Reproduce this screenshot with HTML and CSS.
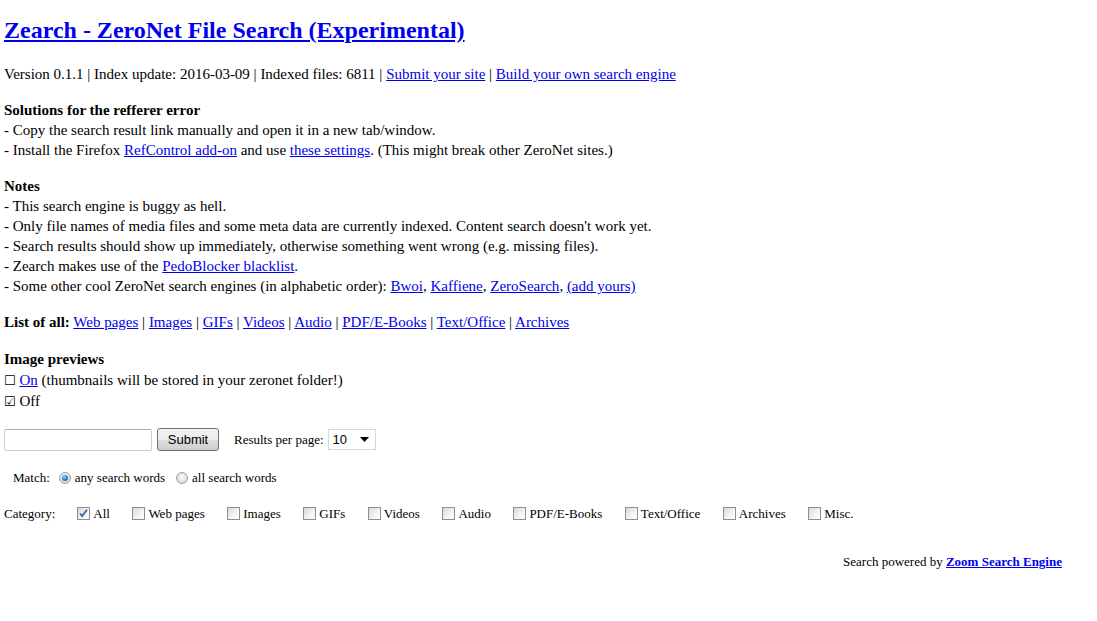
FILE: index.html
```html
<!DOCTYPE html>
<html>
<head>
<meta charset="utf-8">
<title>Zearch</title>
<link rel="stylesheet" href="styles.css">
</head>
<body>
<h1 class="title"><a href="#">Zearch - ZeroNet File Search (Experimental)</a></h1>
<p class="para first">Version 0.1.1 | Index update: 2016-03-09 | Indexed files: 6811 | <a href="#">Submit your site</a> | <a href="#">Build your own search engine</a></p>
<p class="para"><b>Solutions for the refferer error</b><br>
- Copy the search result link manually and open it in a new tab/window.<br>
- Install the Firefox <a href="#">RefControl add-on</a> and use <a href="#">these settings</a>. (This might break other ZeroNet sites.)</p>
<p class="para"><b>Notes</b><br>
- This search engine is buggy as hell.<br>
- Only file names of media files and some meta data are currently indexed. Content search doesn't work yet.<br>
- Search results should show up immediately, otherwise something went wrong (e.g. missing files).<br>
- Zearch makes use of the <a href="#">PedoBlocker blacklist</a>.<br>
- Some other cool ZeroNet search engines (in alphabetic order): <a href="#">Bwoi</a>, <a href="#">Kaffiene</a>, <a href="#">ZeroSearch</a>, <a href="#">(add yours)</a></p>
<p class="para"><b>List of all:</b> <a href="#">Web pages</a> | <a href="#">Images</a> | <a href="#">GIFs</a> | <a href="#">Videos</a> | <a href="#">Audio</a> | <a href="#">PDF/E-Books</a> | <a href="#">Text/Office</a> | <a href="#">Archives</a></p>
<div class="para previews">
<b>Image previews</b>
<div class="opt optfirst"><span class="glyph">☐</span> <a href="#">On</a> (thumbnails will be stored in your zeronet folder!)</div>
<div class="opt"><span class="glyph">☑</span> Off</div>
</div>
<form class="zoom">
<div class="searchrow">
<input type="text" class="query">
<button type="button" class="submit">Submit</button>
<span class="rpp">Results per page:</span>
<div class="select"><span>10</span><svg width="9" height="5" viewBox="0 0 9 5"><path d="M0 0h9L4.5 5z" fill="#000"/></svg></div>
</div>
<div class="matchrow">
<span>Match:</span>
<label class="radio"><span class="rb on"></span>any search words</label>
<label class="radio"><span class="rb"></span>all search words</label>
</div>
<div class="catrow">
<span class="catlabel">Category:</span>
<label class="cat"><span class="cb checked"><svg width="11" height="11" viewBox="0 0 11 11"><path d="M2 5.5l2.2 2.6L9 1.8" fill="none" stroke="#3a5fb5" stroke-width="1.8"/></svg></span>All</label>
<label class="cat"><span class="cb"></span>Web pages</label>
<label class="cat"><span class="cb"></span>Images</label>
<label class="cat"><span class="cb"></span>GIFs</label>
<label class="cat"><span class="cb"></span>Videos</label>
<label class="cat"><span class="cb"></span>Audio</label>
<label class="cat"><span class="cb"></span>PDF/E-Books</label>
<label class="cat"><span class="cb"></span>Text/Office</label>
<label class="cat"><span class="cb"></span>Archives</label>
<label class="cat"><span class="cb"></span>Misc.</label>
</div>
</form>
<div class="powered">Search powered by <a href="#"><b>Zoom Search Engine</b></a></div>
</body>
</html>
```
FILE: styles.css
```css
html, body {
  background: #fff;
}
body {
  margin: 0;
  padding: 0 4px;
  font-family: "Liberation Serif", "Times New Roman", serif;
  font-size: 15px;
  line-height: 20px;
  color: #000;
}
a {
  color: #0000ee;
  text-decoration: underline;
}
.title {
  font-size: 24px;
  line-height: 28px;
  margin: 16px 0 0 0;
  font-weight: bold;
}
.para {
  margin: 16px 0 0 0;
}
.para.first {
  margin-top: 20px;
}
.previews {
  margin-top: 17px;
}
.opt {
  line-height: 21px;
}
.optfirst {
  margin-top: 1px;
}
.glyph {
  font-family: "DejaVu Sans", sans-serif;
  font-size: 13px;
}
.zoom {
  margin: 0;
  font-size: 13px;
}
.searchrow {
  display: flex;
  align-items: center;
  margin-top: 16px;
  height: 23px;
}
.query {
  box-sizing: border-box;
  width: 148px;
  height: 22px;
  border: 1px solid #c9cdd4;
  border-top-color: #a9abb0;
  border-radius: 2px;
  margin: 0;
  padding: 0 2px;
}
.submit {
  box-sizing: border-box;
  width: 62px;
  height: 23px;
  margin: 0 0 0 5px;
  border: 1px solid #707070;
  border-radius: 3px;
  background: linear-gradient(#f2f2f2 0%, #ebebeb 50%, #dddddd 51%, #cfcfcf 100%);
  font-family: "Liberation Sans", Arial, sans-serif;
  font-size: 13px;
  color: #000;
  padding: 0;
}
.rpp {
  margin-left: 15px;
}
.select {
  box-sizing: border-box;
  margin-left: 4px;
  width: 48px;
  height: 21px;
  border: 1px solid #d5d8de;
  display: flex;
  align-items: center;
  justify-content: space-between;
  padding: 0 6px 0 4px;
  font-family: "Liberation Sans", Arial, sans-serif;
  font-size: 13px;
}
.matchrow {
  display: flex;
  align-items: center;
  margin-top: 17px;
  padding-left: 9px;
  height: 20px;
}
.radio {
  display: flex;
  align-items: center;
  margin-left: 9px;
}
.radio + .radio {
  margin-left: 11px;
}
.rb {
  box-sizing: border-box;
  width: 12px;
  height: 12px;
  border-radius: 50%;
  border: 1px solid #a0a0a0;
  background: radial-gradient(circle at 50% 40%, #ffffff 0%, #e0e0e0 60%, #c8c8c8 100%);
  margin-right: 4px;
  position: relative;
}
.rb.on::after {
  content: "";
  position: absolute;
  left: 2px;
  top: 2px;
  width: 6px;
  height: 6px;
  border-radius: 50%;
  background: radial-gradient(circle at 40% 35%, #8fd3ff 0%, #2a86c9 50%, #0a3f74 100%);
}
.catrow {
  display: flex;
  align-items: center;
  gap: 22.5px;
  margin-top: 16px;
  height: 20px;
}
.catlabel {
  margin-right: -0.5px;
}
.cat {
  display: flex;
  align-items: center;
}
.cb {
  box-sizing: border-box;
  width: 13px;
  height: 13px;
  border: 1px solid #8f8f8f;
  background: linear-gradient(135deg, #d8d8d8 0%, #f4f4f4 60%, #ffffff 100%);
  margin-right: 3px;
  margin-top: -2px;
  display: flex;
  align-items: center;
  justify-content: center;
}
.powered {
  margin-top: 28px;
  font-size: 13px;
  text-align: right;
  padding-right: 31px;
}
```
